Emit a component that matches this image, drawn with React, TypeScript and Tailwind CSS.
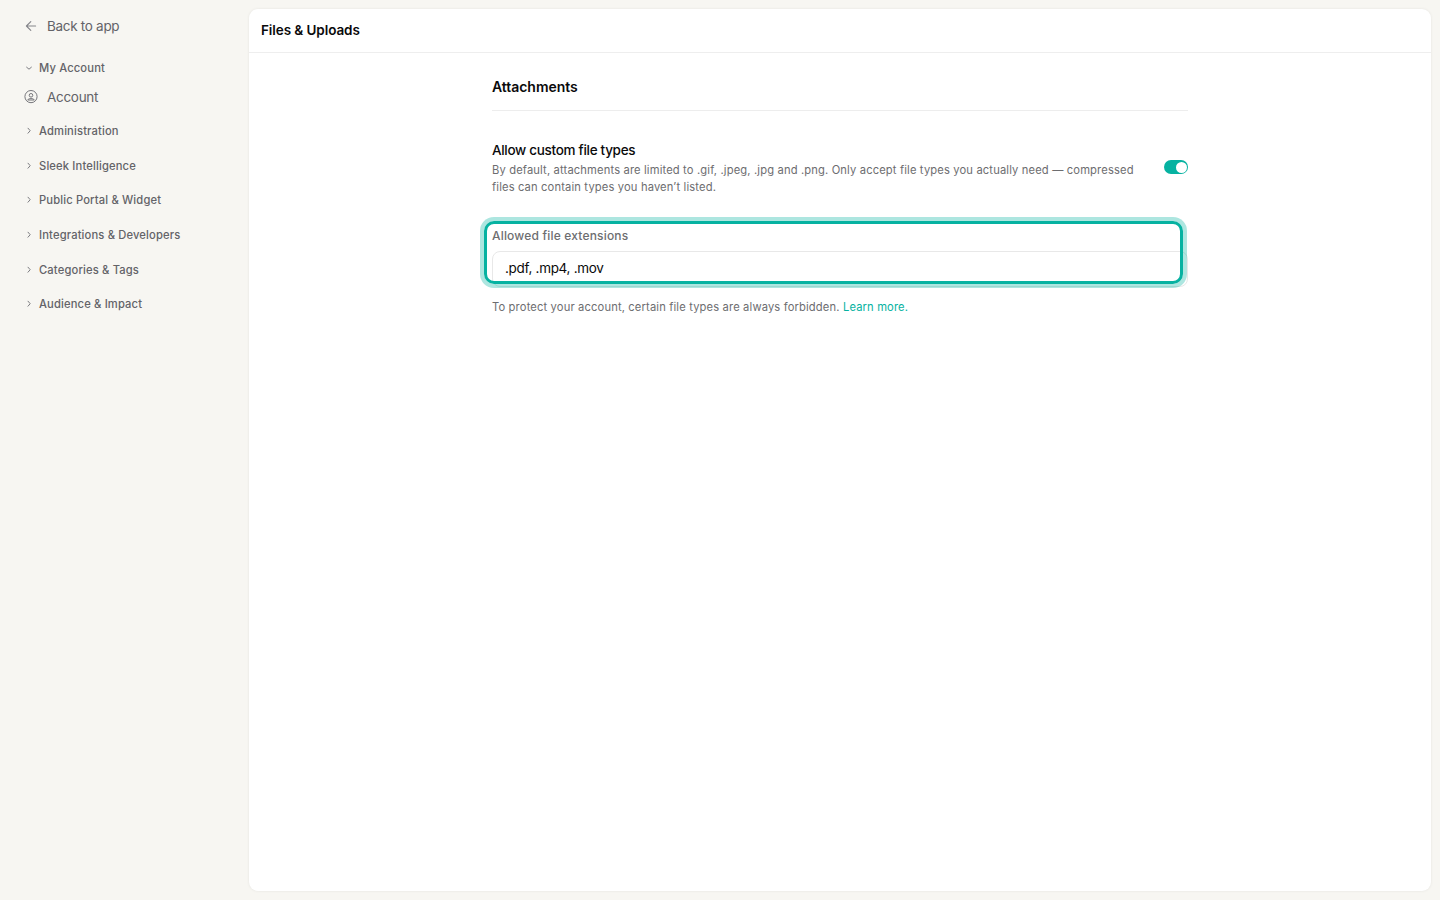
import React from "react";

const sections = [
  { name: "Administration", className: "mt-4" },
  { name: "Sleek Intelligence", className: "mt-[19px]" },
  { name: "Public Portal & Widget", className: "mt-[18px]" },
  { name: "Integrations & Developers", className: "mt-[19px]" },
  { name: "Categories & Tags", className: "mt-[19px]" },
  { name: "Audience & Impact", className: "mt-[18px]" },
];

function Chevron({ open = false }: { open?: boolean }) {
  return (
    <svg
      width="8"
      height="8"
      viewBox="0 0 8 8"
      fill="none"
      stroke="#7c7c81"
      strokeLinecap="round"
      strokeLinejoin="round"
      className="shrink-0"
    >
      <path d={open ? "M1.6 3.2 4 5.2 6.4 3.2" : "M3 1.2 5.2 3.7 3 6.2"} />
    </svg>
  );
}

function Sidebar() {
  return (
    <nav className="w-[249px] shrink-0 pl-6 pt-4 text-[#636368]">
      <a href="#" className="flex h-5 items-center gap-[9px] text-[13.5px] tracking-[-0.3px]">
        <svg
          width="14"
          height="14"
          viewBox="0 0 14 14"
          fill="none"
          stroke="#85858a"
          strokeWidth="1.1"
          strokeLinecap="round"
          strokeLinejoin="round"
        >
          <path d="M11.6 7H2.4M6.8 2.6 2.4 7l4.4 4.4" />
        </svg>
        Back to app
      </a>
      <div className="mt-6 flex h-4 items-center gap-[6px] pl-px text-[11.2px] font-medium tracking-[0.15px]">
        <Chevron open />
        My Account
      </div>
      <a
        href="#"
        className="mt-[11px] flex h-5 items-center gap-[9px] text-[13.5px] tracking-[-0.3px]"
      >
        <svg
          width="14"
          height="14"
          viewBox="0 0 14 14"
          fill="none"
          stroke="#76767b"
        >
          <circle cx="7" cy="6.6" r="6.1" />
          <circle cx="7" cy="5.3" r="1.8" />
          <path d="M3.7 10c.5-1 1.7-1.4 3.3-1.4s2.8.4 3.3 1.4Z" strokeLinejoin="round" />
        </svg>
        Account
      </a>
      {sections.map((section) => (
        <div
          key={section.name}
          className={`flex h-4 items-center gap-[6px] pl-px text-[11.2px] font-medium tracking-[0.15px] ${section.className}`}
        >
          <Chevron />
          {section.name}
        </div>
      ))}
    </nav>
  );
}

export default function App() {
  return (
    <div className="flex h-screen overflow-hidden bg-[#f7f6f2] font-[Inter,sans-serif] antialiased">
      <Sidebar />
      <main className="mb-[9px] mr-[9px] mt-[9px] flex-1 rounded-[9px] bg-white shadow-[0_0_3px_rgba(0,0,0,0.08)]">
        <header className="flex h-11 items-center border-b border-[#eeeeee] px-3">
          <h1 className="text-[13.5px] font-semibold tracking-[-0.08px] text-[#0a0a0b]">
            Files &amp; Uploads
          </h1>
        </header>

        <div className="mx-auto w-[696px] pt-6">
          <h2 className="border-b border-[#ededed] pb-[13px] text-sm font-semibold leading-5 tracking-[-0.04px] text-[#0a0a0b]">
            Attachments
          </h2>

          <div className="mt-[29px] flex items-start justify-between">
            <div className="w-[650px]">
              <h3 className="text-[13.5px] font-medium leading-5 tracking-[-0.3px] text-[#0a0a0b]">
                Allow custom file types
              </h3>
              <p className="mt-[2px] text-[11.2px] leading-[17px] tracking-[0.14px] text-[#6d6d70]">
                By default, attachments are limited to .gif, .jpeg, .jpg and .png. Only accept file
                types you actually need — compressed files can contain types you haven’t listed.
              </p>
            </div>
            <button
              type="button"
              role="switch"
              aria-checked="true"
              aria-label="Allow custom file types"
              className="mt-5 flex h-[14px] w-6 items-center justify-end rounded-full bg-[#06b2a1] pr-px"
            >
              <span className="size-[11px] rounded-full bg-white" />
            </button>
          </div>

          <div className="relative mt-8">
            <label
              htmlFor="extensions"
              className="block text-xs font-medium leading-4 tracking-[0.18px] text-[#6d6d70]"
            >
              Allowed file extensions
            </label>
            <input
              id="extensions"
              defaultValue=".pdf, .mp4, .mov"
              className="mt-[7px] block h-9 w-full rounded-lg border border-[#e8e8e8] px-3 pb-0.5 text-[13.5px] tracking-[-0.3px] text-[#0a0a0b] outline-none"
            />
            <div className="pointer-events-none absolute -left-2 -top-[7px] h-[63px] w-[699px] rounded-[10px] border-[3px] border-[#06b2a1] shadow-[0_0_0_4px_rgba(6,178,161,0.33)]" />
          </div>

          <p className="mt-3 text-[11.2px] leading-4 tracking-[0.14px] text-[#6d6d70]">
            To protect your account, certain file types are always forbidden.{" "}
            <a href="#" className="text-[#06b2a1]">
              Learn more.
            </a>
          </p>
        </div>
      </main>
    </div>
  );
}
